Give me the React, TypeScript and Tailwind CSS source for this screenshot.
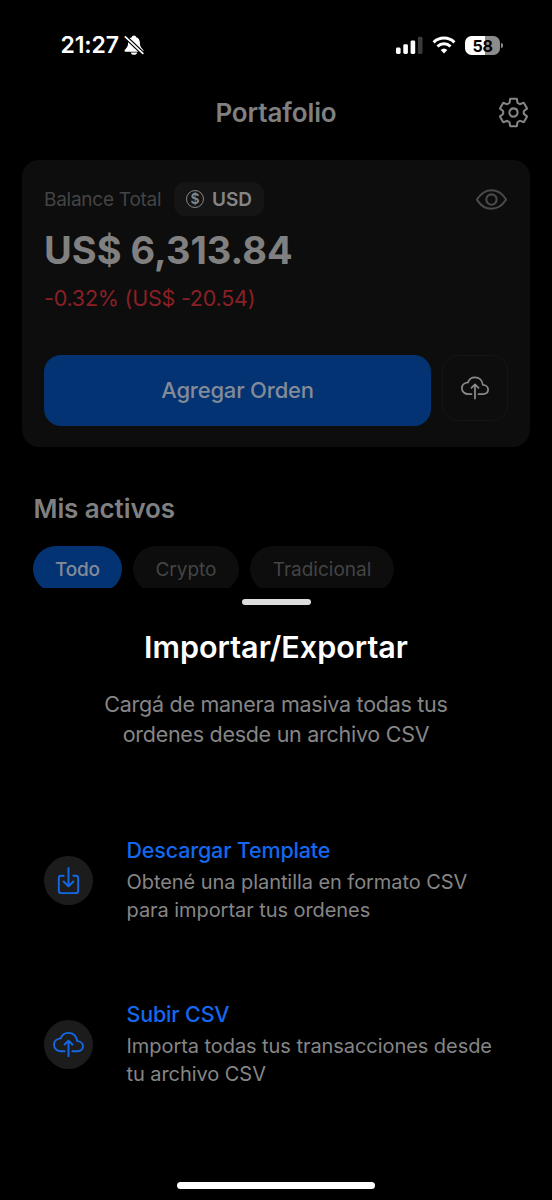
import clsx from "clsx";
import {
  IoCloudUploadOutline,
  IoDownloadOutline,
  IoEyeOutline,
  IoSettingsOutline,
} from "react-icons/io5";
import type { IconType } from "react-icons";

const tabs = [
  { label: "Todo", className: "w-[89px] bg-[#033372] text-[#838b98] font-medium tracking-[-0.2px]" },
  { label: "Crypto", className: "w-[106px] bg-[#0d0d0d] text-[#444444]" },
  { label: "Tradicional", className: "w-36 bg-[#0d0d0d] text-[#444444]" },
];

function BellOff() {
  return (
    <svg width="20" height="20" viewBox="0 0 20 20" fill="none">
      <path
        d="M10 .6c-1.3 0-2 .8-2.2 1.7C5.3 3.1 4.1 5.2 4.1 7.800c0 3.2-.9 4.3-2.100 5.600-.9 1-1.500 1.500-1.500 2.300 0 .6.5 1 1.200 1h16.600c.7 0 1.200-.4 1.200-1 0-.8-.6-1.300-1.500-2.300-1.200-1.300-2.100-2.400-2.100-5.600 0-2.600-1.200-4.700-3.700-5.500C12 1.400 11.300.6 10 .6z"
        fill="white"
      />
      <path d="M6.800 17.400h6.400c-.3 1.400-1.500 2.300-3.200 2.300s-2.900-.9-3.200-2.300z" fill="white" />
      <path d="M1 1.500l18 17" stroke="black" strokeWidth="4" />
      <path d="M1.400 1.900l17.400 16.500" stroke="white" strokeWidth="1.700" strokeLinecap="round" />
    </svg>
  );
}

function Signal() {
  return (
    <svg width="27" height="18" viewBox="0 0 27 18">
      <rect x="0" y="11.500" width="4.600" height="6.500" rx="1.400" fill="white" />
      <rect x="7.300" y="8.200" width="4.600" height="9.800" rx="1.400" fill="white" />
      <rect x="14.600" y="4.500" width="4.600" height="13.500" rx="1.400" fill="white" />
      <rect x="21.900" y="0.800" width="4.600" height="17.200" rx="1.400" fill="#3a3a3a" />
    </svg>
  );
}

function Wifi() {
  return (
    <svg width="24" height="18" viewBox="0 0 24 18" fill="none" stroke="white" strokeWidth="3">
      <path d="M1.600 6.300a15 15 0 0 1 20.800 0" />
      <path d="M5.500 10.500a9.300 9.300 0 0 1 13 0" />
      <path d="M12 17.400l-3.300-3.300a4.800 4.800 0 0 1 6.600 0z" fill="white" stroke="none" />
    </svg>
  );
}

function StatusBar() {
  return (
    <div className="flex h-[90px] shrink-0 items-center justify-between pl-[60.5px] pr-[49px]">
      <div className="flex items-center gap-[5px]">
        <span className="text-[23px] font-semibold tracking-[-0.1px] text-white">21:27</span>
        <BellOff />
      </div>
      <div className="flex items-center gap-[9px]">
        <Signal />
        <Wifi />
        <div className="flex items-center gap-px">
          <div className="flex h-[19px] w-[35px] items-center justify-center rounded-[6.5px] bg-linear-to-r from-white from-58% to-[#8c8c8c] to-58% pt-px text-[16px] leading-none font-bold tracking-[-0.3px] text-black">
            58
          </div>
          <div className="h-[5px] w-[2px] rounded-r-full bg-[#8c8c8c]" />
        </div>
      </div>
    </div>
  );
}

function BalanceCard() {
  return (
    <section className="mx-[22px] mt-[26px] h-[287px] shrink-0 rounded-[17px] bg-[#0d0d0d] px-[22px] pt-[22px]">
      <div className="flex h-[34px] items-center">
        <span className="w-[130px] pt-0.5 text-[19px] tracking-[-0.25px] text-[#444444]">Balance Total</span>
        <div className="flex h-[34px] w-[90px] items-center rounded-[11px] bg-[#151515] pl-3">
          <span className="flex size-[18px] items-center justify-center rounded-full border-[1.5px] border-[#858585] text-[14px] leading-none font-semibold text-[#858585]">
            $
          </span>
          <span className="ml-2 pt-0.5 text-[19px] font-semibold text-[#858585]">USD</span>
        </div>
        <IoEyeOutline className="ml-auto size-[33px] text-[#4a4a4a]" />
      </div>
      <div className="mt-[14px] text-[38px] leading-[41px] font-bold whitespace-nowrap text-[#808080]">
        US$ 6,313.84
      </div>
      <div className="mt-3 text-[21.5px] leading-[30px] tracking-[-0.22px] whitespace-nowrap text-[#8a2025]">
        -0.32% (US$ -20.54)
      </div>
      <div className="mt-[42px] flex items-start justify-between">
        <button className="h-[71px] w-[387px] rounded-[17px] bg-[#033372] text-[22px] font-medium tracking-[-0.2px] text-[#838b98]">
          Agregar Orden
        </button>
        <button className="flex size-[66px] items-center justify-center rounded-[16px] border-[1.5px] border-[#151515] text-[#8a8a8a]">
          <IoCloudUploadOutline className="size-7" />
        </button>
      </div>
    </section>
  );
}

type OptionProps = {
  icon: IconType;
  title: string;
  lines: string[];
};

function Option({ icon: Icon, title, lines }: OptionProps) {
  return (
    <div className="flex h-[82px] items-center pl-11">
      <div className="flex size-[49px] shrink-0 items-center justify-center rounded-full bg-[#1c1c1c]">
        <Icon className="size-[31px] text-[#1468e4]" />
      </div>
      <div className="ml-[33.5px] whitespace-nowrap">
        <div className="mb-[5px] text-[21.5px] leading-[28px] font-medium tracking-[-0.17px] text-[#1468ef]">
          {title}
        </div>
        {lines.map((line) => (
          <div key={line} className="text-[20px] leading-[27.5px] tracking-[-0.06px] text-[#868686]">
            {line}
          </div>
        ))}
      </div>
    </div>
  );
}

function ImportSheet() {
  return (
    <section className="flex flex-1 flex-col bg-black pt-[11px]">
      <div className="mx-auto h-[6px] w-[69px] rounded-full bg-[#dddddd]" />
      <h2 className="mt-[22px] text-center text-[30.5px] leading-[40px] font-semibold text-white">
        Importar/Exportar
      </h2>
      <p className="mt-[22px] text-center text-[21.5px] leading-[30px] tracking-[-0.27px] text-[#868686]">
        Cargá de manera masiva todas tus
        <br />
        ordenes desde un archivo CSV
      </p>
      <div className="mt-[90px] flex flex-col gap-[82px]">
        <Option
          icon={IoDownloadOutline}
          title="Descargar Template"
          lines={["Obtené una plantilla en formato CSV", "para importar tus ordenes"]}
        />
        <Option
          icon={IoCloudUploadOutline}
          title="Subir CSV"
          lines={["Importa todas tus transacciones desde", "tu archivo CSV"]}
        />
      </div>
      <div className="mx-auto mt-auto mb-[11px] h-[7px] w-[198px] rounded-full bg-white" />
    </section>
  );
}

export default function App() {
  return (
    <div className="flex h-[1200px] w-[552px] flex-col overflow-hidden bg-black font-['Inter',sans-serif]">
      <div className="flex h-[588px] shrink-0 flex-col overflow-hidden">
        <StatusBar />
        <header className="grid h-11 shrink-0 grid-cols-[1fr_auto_1fr] items-center px-[22px]">
          <h1 className="col-start-2 text-[26px] font-semibold tracking-[-0.1px] text-[#808080]">Portafolio</h1>
          <IoSettingsOutline className="size-[33px] justify-self-end text-[#858585]" />
        </header>
        <BalanceCard />
        <h2 className="mt-[46px] pl-[33.5px] text-[26px] leading-[32px] font-semibold tracking-[-0.1px] text-[#808080]">
          Mis activos
        </h2>
        <div className="mt-[21px] flex shrink-0 gap-[11px] pl-[33px]">
          {tabs.map((tab) => (
            <button key={tab.label} className={clsx("h-[46px] rounded-full pt-0.5 text-[19px]", tab.className)}>
              {tab.label}
            </button>
          ))}
        </div>
      </div>
      <ImportSheet />
    </div>
  );
}
